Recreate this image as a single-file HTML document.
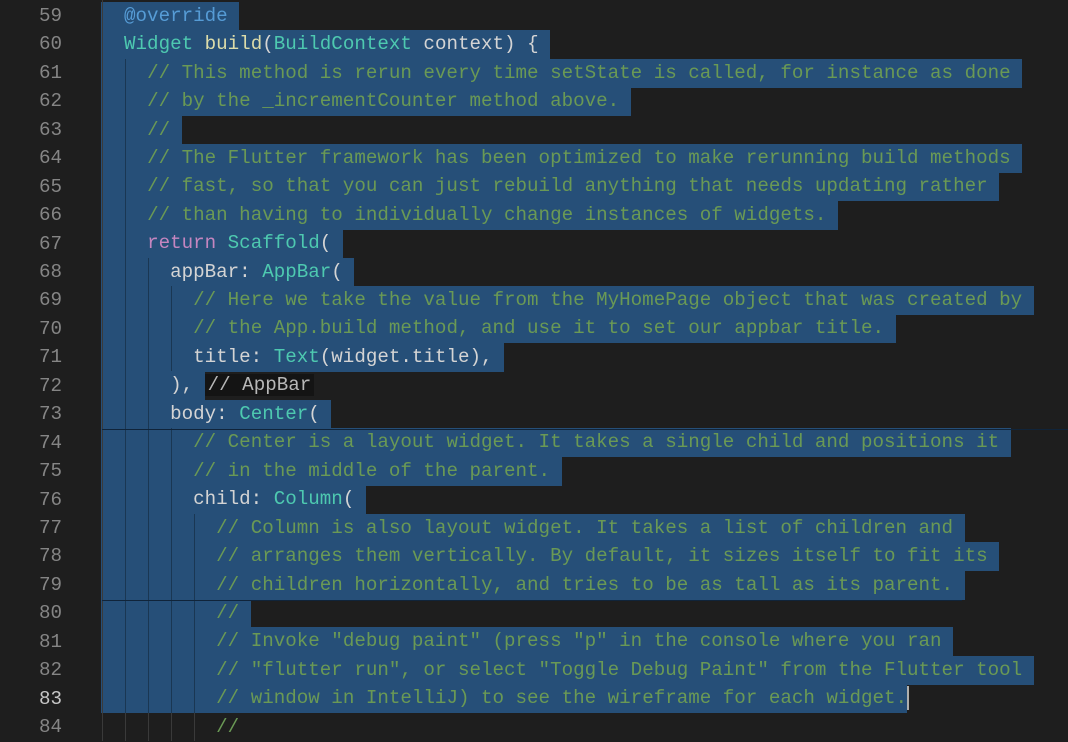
<!DOCTYPE html>
<html><head><meta charset="utf-8"><style>
body{margin:0;background:#1e1e1e;width:1068px;height:741px;overflow:hidden;position:relative;font-family:"Liberation Mono",monospace;font-size:19.2px}
.n{position:absolute;left:0;width:62px;text-align:right;color:#858585;height:28.44px;line-height:28.44px}
.l{position:absolute;left:101px;height:29px;line-height:28.44px;white-space:pre;color:#d4d4d4}
.s{background:#264f78;display:inline-block;height:29px}
.c{color:#6a9955}.k{color:#c586c0}.t{color:#4ec9b0}.f{color:#dcdcaa}.a{color:#569cd6}
.h{background:#141414;color:#b8b8b8;padding:0 3px}
.g{position:absolute;width:1px;background:rgba(0,0,0,.3)}
</style></head><body>
<div class="n" style="top:2px">59</div><div class="n" style="top:30.4px">60</div><div class="n" style="top:58.9px">61</div><div class="n" style="top:87.3px">62</div><div class="n" style="top:115.8px">63</div><div class="n" style="top:144.2px">64</div><div class="n" style="top:172.6px">65</div><div class="n" style="top:201.1px">66</div><div class="n" style="top:229.5px">67</div><div class="n" style="top:258px">68</div><div class="n" style="top:286.4px">69</div><div class="n" style="top:314.8px">70</div><div class="n" style="top:343.3px">71</div><div class="n" style="top:371.7px">72</div><div class="n" style="top:400.2px">73</div><div class="n" style="top:428.6px">74</div><div class="n" style="top:457px">75</div><div class="n" style="top:485.5px">76</div><div class="n" style="top:513.9px">77</div><div class="n" style="top:542.4px">78</div><div class="n" style="top:570.8px">79</div><div class="n" style="top:599.2px">80</div><div class="n" style="top:627.7px">81</div><div class="n" style="top:656.1px">82</div><div class="n" style="top:684.6px;color:#c6c6c6">83</div><div class="n" style="top:713px">84</div>

<div class="l" style="top:2px"><span class="s">  <span class="a">@override</span> </span></div>
<div class="l" style="top:30px"><span class="s">  <span class="t">Widget</span> <span class="f">build</span>(<span class="t">BuildContext</span> context) { </span></div>
<div class="l" style="top:59px"><span class="s">    <span class="c">// This method is rerun every time setState is called, for instance as done</span> </span></div>
<div class="l" style="top:87px"><span class="s">    <span class="c">// by the _incrementCounter method above.</span> </span></div>
<div class="l" style="top:116px"><span class="s">    <span class="c">//</span> </span></div>
<div class="l" style="top:144px"><span class="s">    <span class="c">// The Flutter framework has been optimized to make rerunning build methods</span> </span></div>
<div class="l" style="top:172px"><span class="s">    <span class="c">// fast, so that you can just rebuild anything that needs updating rather</span> </span></div>
<div class="l" style="top:201px"><span class="s">    <span class="c">// than having to individually change instances of widgets.</span> </span></div>
<div class="l" style="top:229px"><span class="s">    <span class="k">return</span> <span class="t">Scaffold</span>( </span></div>
<div class="l" style="top:258px"><span class="s">      appBar: <span class="t">AppBar</span>( </span></div>
<div class="l" style="top:286px"><span class="s">        <span class="c">// Here we take the value from the MyHomePage object that was created by</span> </span></div>
<div class="l" style="top:314px"><span class="s">        <span class="c">// the App.build method, and use it to set our appbar title.</span> </span></div>
<div class="l" style="top:343px"><span class="s">        title: <span class="t">Text</span>(widget.title), </span></div>
<div class="l" style="top:371px"><span class="s">      ), </span><span class="h">// AppBar</span></div>
<div class="l" style="top:400px"><span class="s">      body: <span class="t">Center</span>( </span></div>
<div class="l" style="top:428px"><span class="s">        <span class="c">// Center is a layout widget. It takes a single child and positions it</span> </span></div>
<div class="l" style="top:457px"><span class="s">        <span class="c">// in the middle of the parent.</span> </span></div>
<div class="l" style="top:485px"><span class="s">        child: <span class="t">Column</span>( </span></div>
<div class="l" style="top:514px"><span class="s">          <span class="c">// Column is also layout widget. It takes a list of children and</span> </span></div>
<div class="l" style="top:542px"><span class="s">          <span class="c">// arranges them vertically. By default, it sizes itself to fit its</span> </span></div>
<div class="l" style="top:571px"><span class="s">          <span class="c">// children horizontally, and tries to be as tall as its parent.</span> </span></div>
<div class="l" style="top:599px"><span class="s">          <span class="c">//</span> </span></div>
<div class="l" style="top:627px"><span class="s">          <span class="c">// Invoke "debug paint" (press "p" in the console where you ran</span> </span></div>
<div class="l" style="top:656px"><span class="s">          <span class="c">// "flutter run", or select "Toggle Debug Paint" from the Flutter tool</span> </span></div>
<div class="l" style="top:684px;height:29px"><span class="s" style="height:29px">          <span class="c">// window in IntelliJ) to see the wireframe for each widget.</span></span><span style="display:inline-block;width:2px;height:24px;background:#aeafad;vertical-align:middle"></span></div>
<div class="l" style="top:713px">          <span class="c">//</span></div>

<div class="g" style="left:102px;top:0;height:741px;background:#3a3a3a"></div>
<div class="g" style="left:125px;top:59px;height:682px"></div>
<div class="g" style="left:148px;top:258px;height:483px"></div>
<div class="g" style="left:171px;top:286px;height:85px"></div>
<div class="g" style="left:171px;top:428px;height:313px"></div>
<div class="g" style="left:194px;top:514px;height:227px"></div>
<div style="position:absolute;left:102px;top:713px;width:115px;height:28px;background:repeating-linear-gradient(90deg,#3a3a3a 0 1px,transparent 1px 23px)"></div>
<div style="position:absolute;left:102px;top:429px;width:966px;height:1px;background:#10243a"></div>
<div style="position:absolute;left:102px;top:600px;width:860px;height:1px;background:#10243a"></div>
</body></html>
